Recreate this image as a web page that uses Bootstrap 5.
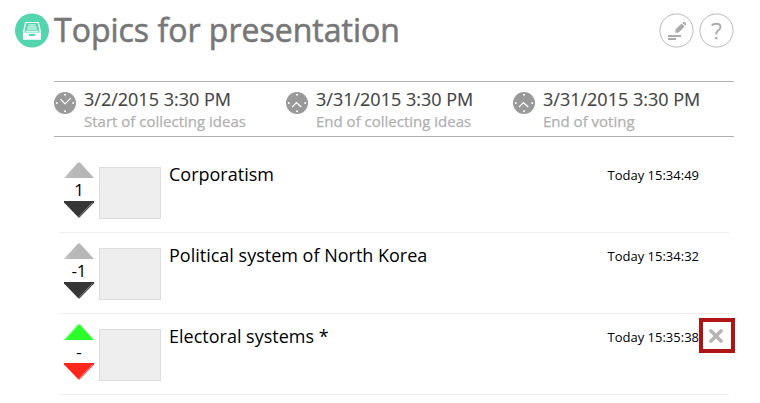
<!DOCTYPE html>
<html lang="en">
<head>
<meta charset="utf-8">
<title>Topics for presentation</title>
<link href="https://cdn.jsdelivr.net/npm/bootstrap@5.3.0/dist/css/bootstrap.min.css" rel="stylesheet">
<style>
body{font-family:"Open Sans","Noto Sans",sans-serif;color:#000;background:#fff;overflow:hidden}
svg{display:block;flex:none}
.page-head{height:81px;padding:13px 26px 0 15px}
.page-title{font-size:32px;line-height:36px;font-weight:400;color:#777;margin:-1px 0 0 5px;white-space:nowrap;-webkit-text-stroke:.6px #777}
.tool{width:35px;height:35px;border:0;padding:0;background:none}
.phases{margin:0 26px 0 54px;height:56px;border-top:1px solid #b0b0b0;border-bottom:1px solid #b0b0b0}
.phase{padding-top:6px;white-space:nowrap}
.phase svg{margin-top:4px;margin-right:8px}
.phase-start{width:232px}
.phase-end{width:227px}
.phase-date{font-size:18px;line-height:22px;color:#444;-webkit-text-stroke:.15px #444}
.phase-label{font-size:15px;line-height:20px;color:#b0b0b0;margin-top:1px;-webkit-text-stroke:.25px #b0b0b0}
.topics{margin:15px 31px 0 59px}
.topic{height:81px;border-bottom:1px solid #eee;padding:10px 30px 0 5px}
.vote{width:30px;margin-right:5px}
.score{font-size:17px;line-height:23px;height:23px;text-align:center}
.thumb{width:62px;height:52px;background:#eee;border:1px solid #ddd;margin:5px 8px 0 0}
.topic-name{font-size:18px;line-height:24px;white-space:nowrap}
.topic-time{font-size:13px;line-height:26px;white-space:nowrap}
.remove{left:640px;top:4px;width:36px;height:35px;border:4px solid #b01515;background:#fff;padding:0 2px 0 0}
</style>
<script src="https://cdn.jsdelivr.net/npm/bootstrap@5.3.0/dist/js/bootstrap.bundle.min.js"></script>
</head>
<body>
<svg width="0" height="0" class="position-absolute" aria-hidden="true">
<defs>
<linearGradient id="gray" x1="0" x2="1"><stop offset="0" stop-color="#c4c4c4"/><stop offset=".25" stop-color="#b9b9b9"/><stop offset="1" stop-color="#b5b5b5"/></linearGradient>
<symbol id="face" viewBox="0 0 22 22"><circle cx="11" cy="11" r="11" fill="#999"/><g fill="#fff"><circle cx="11" cy="2.8" r="1"/><circle cx="11" cy="19.2" r="1"/><circle cx="2.8" cy="11" r="1"/><circle cx="19.2" cy="11" r="1"/></g></symbol>
</defs>
</svg>
<header class="page-head d-flex align-items-start">
<svg width="34" height="35" viewBox="0 0 34 35"><circle cx="17" cy="17.5" r="17" fill="#54d5b0"/><path d="M10.200 9H23.800L26 18.500V26.700H8V18.500Z" fill="#fff"/><path d="M11.200 10H22.800L24.800 19.500H9.200Z" fill="#54d5b0"/><path d="M13.500 12H20.500M12.500 14H21.500M12 16H22M10.500 18.300H23.500" stroke="#fff" stroke-width="1.1"/><path d="M14 21H20V23H14Z" fill="#54d5b0"/></svg>
<h1 class="page-title"><span>Topics for presentation</span></h1>
<div class="d-flex ms-auto" style="gap:5px">
<button class="tool" aria-label="Edit"><svg width="35" height="35" viewBox="0 0 35 35"><circle cx="17.500" cy="17.500" r="16.600" fill="none" stroke="#b8b8b8"/><path d="M9 22H22V24H9ZM9 25H17V27H9Z" fill="#aaa"/><path d="M16.200 19.700L16.700 16.300L22.500 10.600L25.600 13.500L19.700 19.400ZM23.300 9.800L24.300 9Q25.200 8.400 26.400 9.500Q27.800 10.800 27 11.800L26.300 12.700Z" fill="#aaa"/></svg></button>
<button class="tool" aria-label="Help"><svg width="35" height="35" viewBox="0 0 35 35"><circle cx="17.500" cy="17.500" r="16.600" fill="none" stroke="#b8b8b8"/><path d="M12.700 12.400Q14.500 10.700 17.300 10.700Q21.500 10.700 21.500 14Q21.500 15.700 19.400 17.200Q17.200 18.800 17.200 21.500" fill="none" stroke="#aaa" stroke-width="2"/><path d="M16 24H18.400V26.200H16Z" fill="#aaa"/></svg></button>
</div>
</header>
<section class="phases d-flex">
<div class="phase phase-start d-flex"><svg width="22" height="22"><use href="#face"/><path d="M6.500 7.200L11 12L16.800 6.200" fill="none" stroke="#fff" stroke-width="1.2"/></svg><div><div class="phase-date"><span>3/2/2015 3:30 PM</span></div><div class="phase-label"><span>Start of collecting ideas</span></div></div></div>
<div class="phase phase-end d-flex"><svg width="22" height="22"><use href="#face"/><path d="M6 15.200L10.500 10.700L15.300 15" fill="none" stroke="#fff" stroke-width="1.2"/></svg><div><div class="phase-date"><span>3/31/2015 3:30 PM</span></div><div class="phase-label"><span>End of collecting ideas</span></div></div></div>
<div class="phase d-flex"><svg width="22" height="22"><use href="#face"/><path d="M6 15.200L10.500 10.700L15.300 15" fill="none" stroke="#fff" stroke-width="1.2"/></svg><div><div class="phase-date"><span>3/31/2015 3:30 PM</span></div><div class="phase-label"><span>End of voting</span></div></div></div>
</section>
<main class="topics">
<article class="topic d-flex">
<div class="vote"><svg width="30" height="16"><path d="M0 16L14 .500H16L30 16Z" fill="url(#gray)"/></svg><div class="score">1</div><svg width="30" height="17"><path d="M0 0H30V1.500L15.500 16.500H14.500L0 1.500Z" fill="#363636"/><path d="M28.500 1.500L15 15.500" stroke="#999" stroke-width=".8"/></svg></div>
<div class="thumb"></div><div class="topic-name"><span>Corporatism</span></div><div class="topic-time ms-auto"><span>Today 15:34:49</span></div>
</article>
<article class="topic d-flex">
<div class="vote"><svg width="30" height="16"><path d="M0 16L14 .500H16L30 16Z" fill="url(#gray)"/></svg><div class="score">-1</div><svg width="30" height="17"><path d="M0 0H30V1.500L15.500 16.500H14.500L0 1.500Z" fill="#363636"/><path d="M28.500 1.500L15 15.500" stroke="#999" stroke-width=".8"/></svg></div>
<div class="thumb"></div><div class="topic-name"><span>Political system of North Korea</span></div><div class="topic-time ms-auto"><span>Today 15:34:32</span></div>
</article>
<article class="topic d-flex position-relative">
<div class="vote"><svg width="30" height="16"><path d="M0 16L14 .500H16L30 16Z" fill="#2bff2b"/><path d="M1.500 15.500L14.500 1.200" stroke="#7dff7d" stroke-width=".8"/></svg><div class="score">-</div><svg width="30" height="17"><path d="M0 0H30V1.500L15.500 16.500H14.500L0 1.500Z" fill="#ff261c"/><path d="M28.500 1.500L15 15.500" stroke="#ff9a94" stroke-width=".8"/></svg></div>
<div class="thumb"></div><div class="topic-name"><span>Electoral systems *</span></div><div class="topic-time ms-auto"><span>Today 15:35:38</span></div>
<button class="remove position-absolute d-flex align-items-center justify-content-center" aria-label="Remove"><svg width="14" height="14"><path d="M2 2L12 12M12 2L2 12" stroke="#b5b5b5" stroke-width="3.600" stroke-linecap="round"/></svg></button>
</article>
</main>
</body>
</html>
